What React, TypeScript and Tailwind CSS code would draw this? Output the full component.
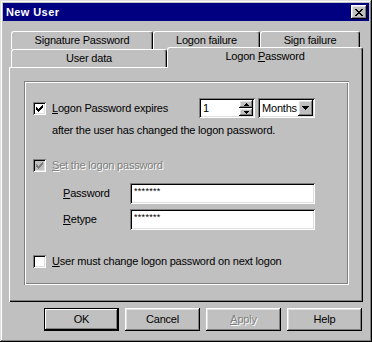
import React from "react";

const raised =
  "shadow-[inset_-1px_-1px_0_#000,inset_1px_1px_0_#fff,inset_-2px_-2px_0_#808080,inset_2px_2px_0_#dfdfdf]";
const sunken =
  "shadow-[inset_1px_1px_0_#808080,inset_-1px_-1px_0_#fff,inset_2px_2px_0_#000,inset_-2px_-2px_0_#dfdfdf]";
const disabledText = "text-[#808080] [text-shadow:1px_1px_0_#fff]";

const CheckMark = ({ color }: { color: string }) => (
  <svg width="7" height="7" viewBox="0 0 7 7" shapeRendering="crispEdges">
    <path
      fill={color}
      d="M6 0h1v1h-1z M5 1h2v1h-2z M0 2h1v1h-1z M4 2h3v1h-3z M0 3h2v1h-2z M3 3h3v1h-3z M0 4h5v1h-5z M1 5h3v1h-3z M2 6h1v1h-1z"
    />
  </svg>
);

const Check = ({ checked, disabled }: { checked?: boolean; disabled?: boolean }) => (
  <div
    className={`w-[13px] h-[13px] shrink-0 flex items-center justify-center ${sunken} ${
      disabled ? "bg-[#c0c0c0]" : "bg-white"
    }`}
  >
    {checked && <CheckMark color={disabled ? "#808080" : "#000"} />}
  </div>
);

const Arrow = ({ up }: { up?: boolean }) => (
  <svg width="5" height="3" viewBox="0 0 5 3" shapeRendering="crispEdges">
    <path
      fill="#000"
      d={up ? "M2 0h1v1h-1z M1 1h3v1h-3z M0 2h5v1h-5z" : "M0 0h5v1h-5z M1 1h3v1h-3z M2 2h1v1h-1z"}
    />
  </svg>
);

const Spinner = () => (
  <div className={`w-[56px] h-[20px] bg-white flex p-[2px] ${sunken}`}>
    <div className="flex-1 pl-[2px] flex items-center">1</div>
    <div className="w-[14px] flex flex-col">
      <div className={`h-[8px] bg-[#c0c0c0] flex items-center justify-center ${raised}`}>
        <Arrow up />
      </div>
      <div className={`h-[8px] bg-[#c0c0c0] flex items-center justify-center ${raised}`}>
        <Arrow />
      </div>
    </div>
  </div>
);

const Combo = () => (
  <div className={`ml-[3px] w-[57px] h-[20px] bg-white flex p-[2px] ${sunken}`}>
    <div className="flex-1 pl-[2px] flex items-center overflow-hidden">Months</div>
    <div className={`w-[15px] bg-[#c0c0c0] flex items-center justify-center ${raised}`}>
      <svg width="7" height="4" viewBox="0 0 7 4" shapeRendering="crispEdges">
        <path fill="#000" d="M0 0h7v1h-7z M1 1h5v1h-5z M2 2h3v1h-3z M3 3h1v1h-1z" />
      </svg>
    </div>
  </div>
);

const Field = () => (
  <div
    className={`w-[185px] h-[21px] bg-white pt-[3px] pl-[4px] text-[9px] leading-[11px] tracking-[0.3px] ${sunken}`}
  >
    *******
  </div>
);

const Tab = ({ w, children }: { w: string; children: React.ReactNode }) => (
  <div
    className={`${w} h-[18px] flex items-center justify-center border-t border-l border-white border-r border-r-black rounded-t-[3px] shadow-[inset_-1px_0_0_#808080]`}
  >
    {children}
  </div>
);

const Button = ({ children, def }: { children: React.ReactNode; def?: boolean }) => (
  <div
    className={`w-[75px] h-[23px] flex items-center justify-center ${
      def
        ? "border border-black shadow-[inset_-1px_-1px_0_#000,inset_1px_1px_0_#fff,inset_-2px_-2px_0_#808080]"
        : raised
    }`}
  >
    {children}
  </div>
);

export default function App() {
  return (
    <div className="w-[372px] h-[342px] bg-[#c0c0c0] p-[3px] flex flex-col text-black text-[11px] leading-[13px] tracking-[-0.2px] font-['Liberation_Sans',Arial,sans-serif] shadow-[inset_-1px_-1px_0_#000,inset_1px_1px_0_#dfdfdf,inset_-2px_-2px_0_#808080,inset_2px_2px_0_#fff]">
      {/* title bar */}
      <div className="h-[18px] bg-[#000080] flex items-center justify-between pl-[3px] pr-[2px]">
        <span className="text-white font-bold tracking-[0.4px]">New User</span>
        <div className={`w-[16px] h-[14px] bg-[#c0c0c0] flex items-center justify-center ${raised}`}>
          <svg width="8" height="7" viewBox="0 0 8 7" shapeRendering="crispEdges">
            <path
              fill="#000"
              d="M0 0h2v1h-2z M6 0h2v1h-2z M1 1h2v1h-2z M5 1h2v1h-2z M2 2h4v1h-4z M3 3h2v1h-2z M2 4h4v1h-4z M1 5h2v1h-2z M5 5h2v1h-2z M0 6h2v1h-2z M6 6h2v1h-2z"
            />
          </svg>
        </div>
      </div>

      {/* tabs */}
      <div className="mx-[6px] mt-[10px] pl-[2px]">
        <div className="flex">
          <Tab w="w-[142px]">Signature Password</Tab>
          <Tab w="w-[107px]">Logon failure</Tab>
          <Tab w="w-[100px]">Sign failure</Tab>
        </div>
        <div className="flex h-[18px]">
          <Tab w="w-[156px]">User data</Tab>
          <div className="relative z-10 -mt-[2px] h-[21px] w-[196px] bg-[#c0c0c0] flex justify-center pt-[2px] border-t border-l border-white border-r border-r-black rounded-t-[3px] shadow-[inset_-1px_0_0_#808080]">
            <span>
              Logon <span className="underline">P</span>assword
            </span>
          </div>
        </div>
      </div>

      {/* panel */}
      <div className="mx-[6px] h-[235px] pt-[14px] pl-[15px] pr-[14px] pb-[17px] shadow-[inset_1px_1px_0_#fff,inset_-1px_-1px_0_#000,inset_-2px_-2px_0_#808080]">
        <div className="h-full pl-[9px] pt-[17px] shadow-[inset_1px_1px_0_#808080,inset_2px_2px_0_#fff,inset_-1px_-1px_0_#fff,inset_-2px_-2px_0_#808080]">
          <div className="flex items-center h-[20px]">
            <Check checked />
            <span className="ml-[6px] w-[147px]">
              <span className="underline">L</span>ogon Password expires
            </span>
            <Spinner />
            <Combo />
          </div>
          <div className="mt-[6px] pl-[19px]">after the user has changed the logon password.</div>
          <div className="mt-[22px] flex items-center h-[13px]">
            <Check checked disabled />
            <span className={`ml-[6px] ${disabledText}`}>
              <span className="underline">S</span>et the logon password
            </span>
          </div>
          <div className="mt-[11px] flex items-center h-[21px]">
            <span className="pl-[30px] w-[97px]">
              <span className="underline">P</span>assword
            </span>
            <Field />
          </div>
          <div className="mt-[5px] flex items-center h-[21px]">
            <span className="pl-[30px] w-[97px]">
              <span className="underline">R</span>etype
            </span>
            <Field />
          </div>
          <div className="mt-[25px] flex items-center h-[13px]">
            <Check />
            <span className="ml-[6px]">
              <span className="underline">U</span>ser must change logon password on next logon
            </span>
          </div>
        </div>
      </div>

      {/* buttons */}
      <div className="mt-[6px] flex justify-end gap-[6px] pr-[7px]">
        <Button def>OK</Button>
        <Button>Cancel</Button>
        <Button>
          <span className={disabledText}>
            <span className="underline">A</span>pply
          </span>
        </Button>
        <Button>Help</Button>
      </div>
    </div>
  );
}
